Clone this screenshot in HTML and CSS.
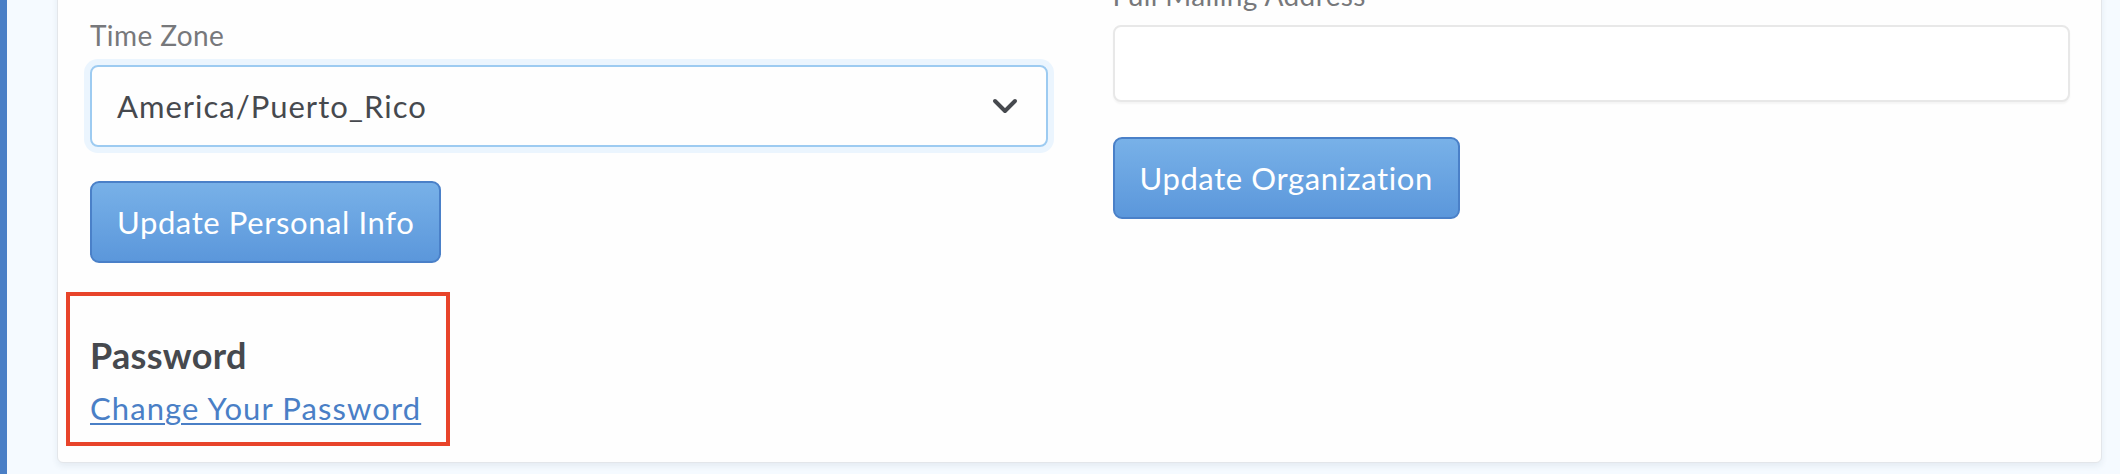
FILE: index.html
```html
<!DOCTYPE html>
<html lang="en">
<head>
    <meta charset="UTF-8">
    <meta name="viewport" content="width=device-width, initial-scale=1.0">
    <title>Account Settings</title>
    <link rel="stylesheet" href="styles.css">
</head>
<body>
    <div class="page">
        <form method="post" class="card">
            <div class="columns">
                <div class="col">
                    <div class="field">
                        <label class="label">Time Zone</label>
                        <div class="select">
                            <span>America/Puerto_Rico</span>
                            <svg class="chevron" width="26" height="16" viewBox="0 0 26 16">
                                <path d="M3 3 L13 13 L23 3" fill="none" stroke="#46494e" stroke-width="4" stroke-linecap="round" stroke-linejoin="round"/>
                            </svg>
                        </div>
                    </div>
                    <button type="button" class="btn">Update Personal Info</button>
                    <div class="password">
                        <h3>Password</h3>
                        <a href="#">Change Your Password</a>
                    </div>
                </div>
                <div class="col col-right">
                    <div class="field">
                        <label class="label">Full Mailing Address</label>
                        <textarea class="input" name="address"></textarea>
                    </div>
                    <button type="button" class="btn btn-org">Update Organization</button>
                </div>
            </div>
        </form>
    </div>
</body>
</html>
```

FILE: styles.css
```css
body {
    margin: 0;
    font-family: Lato, "Liberation Sans", sans-serif;
    font-size: 31px;
    color: #46494e;
    background: #f5faff;
    overflow: hidden;
}

.page {
    display: flow-root;
    height: 474px;
    border-left: 7px solid #4a7fc6;
    padding: 0 18px 0 50px;
    box-sizing: border-box;
}

.card {
    margin-top: -60px;
    padding: 78px 31px 16px 32px;
    background: #fefefe;
    border: 1px solid #e3e6ea;
    border-radius: 6px;
    box-shadow: 0 3px 6px rgba(40, 60, 90, 0.08);
}

.columns {
    display: grid;
    grid-template-columns: 1fr 1fr;
    gap: 65px;
    align-items: start;
}

.col {
    display: flex;
    flex-direction: column;
    align-items: flex-start;
}

.col-right {
    margin-top: -40px;
}

.field {
    width: 100%;
    display: flex;
    flex-direction: column;
}

.label {
    font-size: 28px;
    line-height: 32px;
    letter-spacing: 0.4px;
    color: #77787b;
    margin-bottom: 14px;
}

.select {
    height: 82px;
    box-sizing: border-box;
    border: 2px solid #9dcbf1;
    border-radius: 8px;
    box-shadow: 0 0 0 6px #ebf5fe;
    display: flex;
    align-items: center;
    justify-content: space-between;
    padding: 0 28px 0 25px;
    letter-spacing: 1px;
}

.chevron {
    display: block;
}

.input {
    height: 77px;
    box-sizing: border-box;
    border: 2px solid #e8e8e8;
    border-radius: 8px;
    box-shadow: 0 2px 2px rgba(0, 0, 0, 0.04);
    resize: none;
    font: inherit;
    outline: none;
}

.btn {
    height: 82px;
    margin-top: 34px;
    padding: 0 25px;
    font-family: inherit;
    font-size: 31px;
    letter-spacing: 0.6px;
    color: #fff;
    background: linear-gradient(#78b1e8, #5b97db);
    border: 2px solid #4a80c8;
    border-radius: 9px;
    cursor: pointer;
}

.btn-org {
    margin-top: 35px;
}

/* outlined password section */
.password {
    margin: 29px 0 0 -24px;
    width: 384px;
    height: 154px;
    box-sizing: border-box;
    border: 4px solid #e8442a;
    padding: 38px 20px 0 20px;
}

.password h3 {
    margin: 0 0 13px;
    font-size: 36px;
    line-height: 42px;
    font-weight: bold;
    letter-spacing: 0.3px;
    color: #46494e;
}

.password a {
    display: inline-block;
    line-height: 36px;
    color: #4a7fc6;
    letter-spacing: 1.1px;
    text-decoration-thickness: 2px;
    text-underline-offset: 3px;
}
```
